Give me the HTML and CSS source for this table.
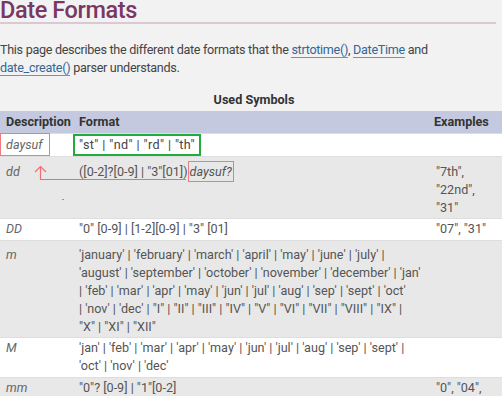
FILE: index.html
```html
<!DOCTYPE html>
<html>
<head>
<meta charset="utf-8">
<link rel="stylesheet" href="styles.css">
</head>
<body>
<div class="page">
  <h1 class="title">Date Formats</h1>
  <p class="intro">This page describes the different date formats that the <a href="#">strtotime()</a>, <a href="#">DateTime</a> and <a href="#">date_create()</a> parser understands.</p>
  <table class="symbols">
    <caption>Used Symbols</caption>
    <thead>
      <tr><th class="c-desc">Description</th><th class="c-fmt">Format</th><th class="c-ex">Examples</th></tr>
    </thead>
    <tbody>
      <tr class="row-white row-daysuf">
        <td class="c-desc"><span class="mark-red desc-mark">daysuf</span></td>
        <td class="c-fmt"><span class="mark-green">"st" | "nd" | "rd" | "th"</span></td>
        <td class="c-ex"></td>
      </tr>
      <tr class="row-grey row-dd">
        <td class="c-desc">dd</td>
        <td class="c-fmt">([0-2]?[0-9] | "3"[01])<span class="mark-red fmt-mark">daysuf?</span></td>
        <td class="c-ex">"7th",<br>"22nd",<br>"31"</td>
      </tr>
      <tr class="row-white row-tight">
        <td class="c-desc">DD</td>
        <td class="c-fmt">"0" [0-9] | [1-2][0-9] | "3" [01]</td>
        <td class="c-ex">"07", "31"</td>
      </tr>
      <tr class="row-grey row-m">
        <td class="c-desc">m</td>
        <td class="c-fmt">'january' | 'february' | 'march' | 'april' | 'may' | 'june' | 'july' | 'august' | 'september' | 'october' | 'november' | 'december' | 'jan' | 'feb' | 'mar' | 'apr' | 'may' | 'jun' | 'jul' | 'aug' | 'sep' | 'sept' | 'oct' <span class="nowrap">| 'nov'</span> | 'dec' | "I" | "II" | "III" | "IV" | "V" | "VI" | "VII" | "VIII" | "IX" | <span class="nowrap">"X" | "XI"</span> | "XII"</td>
        <td class="c-ex"></td>
      </tr>
      <tr class="row-white row-tight">
        <td class="c-desc">M</td>
        <td class="c-fmt">'jan' | 'feb' | 'mar' | 'apr' | 'may' | 'jun' | 'jul' | 'aug' | 'sep' | 'sept' | 'oct' | 'nov' | 'dec'</td>
        <td class="c-ex"></td>
      </tr>
      <tr class="row-grey row-tight">
        <td class="c-desc">mm</td>
        <td class="c-fmt">"0"? [0-9] | "1"[0-2]</td>
        <td class="c-ex">"0", "04",<br>"7", "12"</td>
      </tr>
    </tbody>
  </table>
  <svg class="annot" width="502" height="396" viewBox="0 0 502 396">
    <g fill="none" stroke="#ee6f72" stroke-width="1.2">
      <path d="M40.5 167.5 V180.5 H186"/>
      <path d="M35 173 L40.5 167.5 L46 173"/>
      <path d="M62 200.5 H64"/>
    </g>
  </svg>
</div>
</body>
</html>
```
FILE: styles.css
```css
html, body {
  margin: 0;
  padding: 0;
}
body {
  background: #f2f2f2;
  font-family: Roboto, "Noto Sans", sans-serif;
  font-size: 12.6px;
  color: #444;
  width: 502px;
  height: 396px;
  overflow: hidden;
}
.page {
  position: relative;
  padding: 0;
}
.title {
  margin: 0;
  padding: 0;
  font-size: 23.5px;
  font-weight: 500;
  letter-spacing: -0.4px;
  line-height: 22px;
  color: #793862;
  border-bottom: 2px solid #dcc8d3;
  width: 496px;
  height: 23px;
  margin-top: -1px;
}
.intro {
  margin: 17px 0 0 0;
  line-height: 18px;
  color: #444;
  width: 480px;
  letter-spacing: -0.3px;
}
.intro a {
  color: #336699;
  text-decoration: none;
  border-bottom: 1px solid #6f94bd;
}
.symbols {
  border-collapse: collapse;
  width: 493px;
  margin-top: 13px;
  table-layout: fixed;
}
.symbols caption {
  font-weight: bold;
  color: #333;
  line-height: 18px;
  padding: 1px 0 2px 6px;
}
.symbols th {
  background: #c4c9df;
  color: #333;
  font-weight: bold;
  text-align: left;
  height: 22px;
  padding: 0 6px;
  line-height: 18px;
}
.symbols td {
  padding: 2px 6px;
  line-height: 18px;
  vertical-align: top;
  border-top: 1px solid #dedede;
}
.c-desc { width: 61px; }
.c-fmt { width: 345px; }
.c-ex { width: 62px; }
.symbols th.c-ex { padding-left: 4px; }
td.c-desc {
  font-style: italic;
  color: #666;
}
td.c-fmt { color: #555; }
td.c-ex { color: #555; }
.nowrap { white-space: nowrap; }
.row-white td { background: #ffffff; }
.row-grey td { background: #e8e8e8; }
.row-dd td { padding-top: 6px; padding-bottom: 1px; }
.row-tight td { padding-top: 1px; padding-bottom: 2px; }
.row-m td { padding-top: 5px; padding-bottom: 1px; }
.mark-red {
  border: 1.5px solid #f07b7f;
  display: inline-block;
}
.desc-mark {
  margin: -3px 0 -3px -6px;
  padding: 2px 6px 1px 5px;
}
.fmt-mark {
  margin: -5px 0 -3px 0;
  padding: 1px 1px 0 1px;
  font-style: italic;
}
.mark-green {
  display: inline-block;
  border: 2.5px solid #1fad3e;
  margin: -2px 0 -3px -6px;
  padding: 0 4px;
  color: #444;
  letter-spacing: 0.4px;
}
.annot {
  position: absolute;
  left: 0;
  top: 0;
  pointer-events: none;
}
```
